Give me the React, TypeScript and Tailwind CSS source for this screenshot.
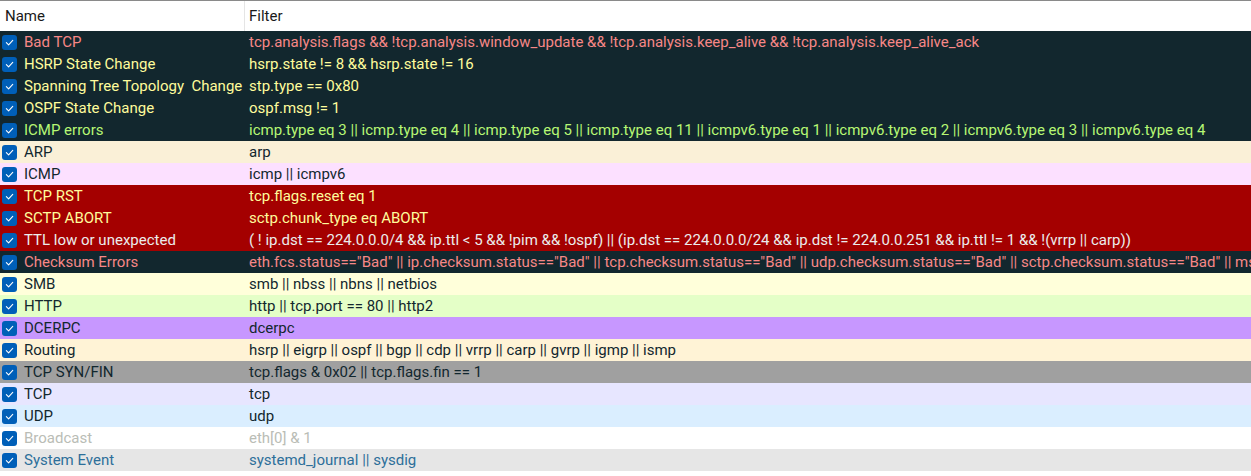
import React from "react"

type Rule = { name: string; filter: string; bg: string; fg: string }

// Colores por defecto de las reglas de coloreado
const rules: Rule[] = [
  { name: "Bad TCP", filter: "tcp.analysis.flags && !tcp.analysis.window_update && !tcp.analysis.keep_alive && !tcp.analysis.keep_alive_ack", bg: "bg-[#12272e]", fg: "text-[#f78787]" },
  { name: "HSRP State Change", filter: "hsrp.state != 8 && hsrp.state != 16", bg: "bg-[#12272e]", fg: "text-[#fffc9c]" },
  { name: "Spanning Tree Topology  Change", filter: "stp.type == 0x80", bg: "bg-[#12272e]", fg: "text-[#fffc9c]" },
  { name: "OSPF State Change", filter: "ospf.msg != 1", bg: "bg-[#12272e]", fg: "text-[#fffc9c]" },
  { name: "ICMP errors", filter: "icmp.type eq 3 || icmp.type eq 4 || icmp.type eq 5 || icmp.type eq 11 || icmpv6.type eq 1 || icmpv6.type eq 2 || icmpv6.type eq 3 || icmpv6.type eq 4", bg: "bg-[#12272e]", fg: "text-[#b7f774]" },
  { name: "ARP", filter: "arp", bg: "bg-[#faf0d7]", fg: "text-[#12272e]" },
  { name: "ICMP", filter: "icmp || icmpv6", bg: "bg-[#fce0ff]", fg: "text-[#12272e]" },
  { name: "TCP RST", filter: "tcp.flags.reset eq 1", bg: "bg-[#a40000]", fg: "text-[#fffc9c]" },
  { name: "SCTP ABORT", filter: "sctp.chunk_type eq ABORT", bg: "bg-[#a40000]", fg: "text-[#fffc9c]" },
  { name: "TTL low or unexpected", filter: "( ! ip.dst == 224.0.0.0/4 && ip.ttl < 5 && !pim && !ospf) || (ip.dst == 224.0.0.0/24 && ip.dst != 224.0.0.251 && ip.ttl != 1 && !(vrrp || carp))", bg: "bg-[#a40000]", fg: "text-[#ececec]" },
  { name: "Checksum Errors", filter: "eth.fcs.status==\"Bad\" || ip.checksum.status==\"Bad\" || tcp.checksum.status==\"Bad\" || udp.checksum.status==\"Bad\" || sctp.checksum.status==\"Bad\" || mstp.checksum.status==\"Bad\" || cdp.checksum.status==\"Bad\"", bg: "bg-[#12272e]", fg: "text-[#f78787]" },
  { name: "SMB", filter: "smb || nbss || nbns || netbios", bg: "bg-[#ffffda]", fg: "text-[#12272e]" },
  { name: "HTTP", filter: "http || tcp.port == 80 || http2", bg: "bg-[#e4ffc7]", fg: "text-[#12272e]" },
  { name: "DCERPC", filter: "dcerpc", bg: "bg-[#c797ff]", fg: "text-[#12272e]" },
  { name: "Routing", filter: "hsrp || eigrp || ospf || bgp || cdp || vrrp || carp || gvrp || igmp || ismp", bg: "bg-[#fff3d6]", fg: "text-[#12272e]" },
  { name: "TCP SYN/FIN", filter: "tcp.flags & 0x02 || tcp.flags.fin == 1", bg: "bg-[#a0a0a0]", fg: "text-[#12272e]" },
  { name: "TCP", filter: "tcp", bg: "bg-[#e7e6ff]", fg: "text-[#12272e]" },
  { name: "UDP", filter: "udp", bg: "bg-[#daeeff]", fg: "text-[#12272e]" },
  { name: "Broadcast", filter: "eth[0] & 1", bg: "bg-[#ffffff]", fg: "text-[#babdb6]" },
  { name: "System Event", filter: "systemd_journal || sysdig", bg: "bg-[#e6e6e6]", fg: "text-[#2d6f9a]" },
]

const Check = () => (
  <span className="flex h-[15px] w-[15px] shrink-0 items-center justify-center rounded-[3px] bg-[#005fb8]">
    <svg width="9" height="9" viewBox="0 0 10 10" fill="none">
      <path d="M1.5 5.2 L4 7.6 L8.6 2.6" stroke="white" strokeWidth="1.2" strokeLinecap="round" strokeLinejoin="round" />
    </svg>
  </span>
)

export default function App() {
  return (
    <div className="h-[476px] w-[1251px] overflow-hidden bg-white text-[15px] font-['Roboto',sans-serif]">
      {/* Cabecera */}
      <div className="flex h-[31px] border-t border-[#8a8a8a] text-[#1a1a1a]">
        <div className="flex w-[245px] items-center border-r border-[#e5e5e5] pl-[5px] pt-[1px]">Name</div>
        <div className="flex items-center pl-[4px] pt-[1px]">Filter</div>
      </div>

      {rules.map(rule => (
        <div key={rule.name} className={`flex h-[22px] items-center whitespace-nowrap ${rule.bg} ${rule.fg}`}>
          <div className="flex w-[245px] shrink-0 items-center gap-[7px] pl-[2px]">
            <Check />
            <span className="whitespace-pre pt-[1px]">{rule.name}</span>
          </div>
          <div className="min-w-0 flex-1 overflow-hidden pl-[4px] pt-[1px]">{rule.filter}</div>
        </div>
      ))}
    </div>
  )
}
